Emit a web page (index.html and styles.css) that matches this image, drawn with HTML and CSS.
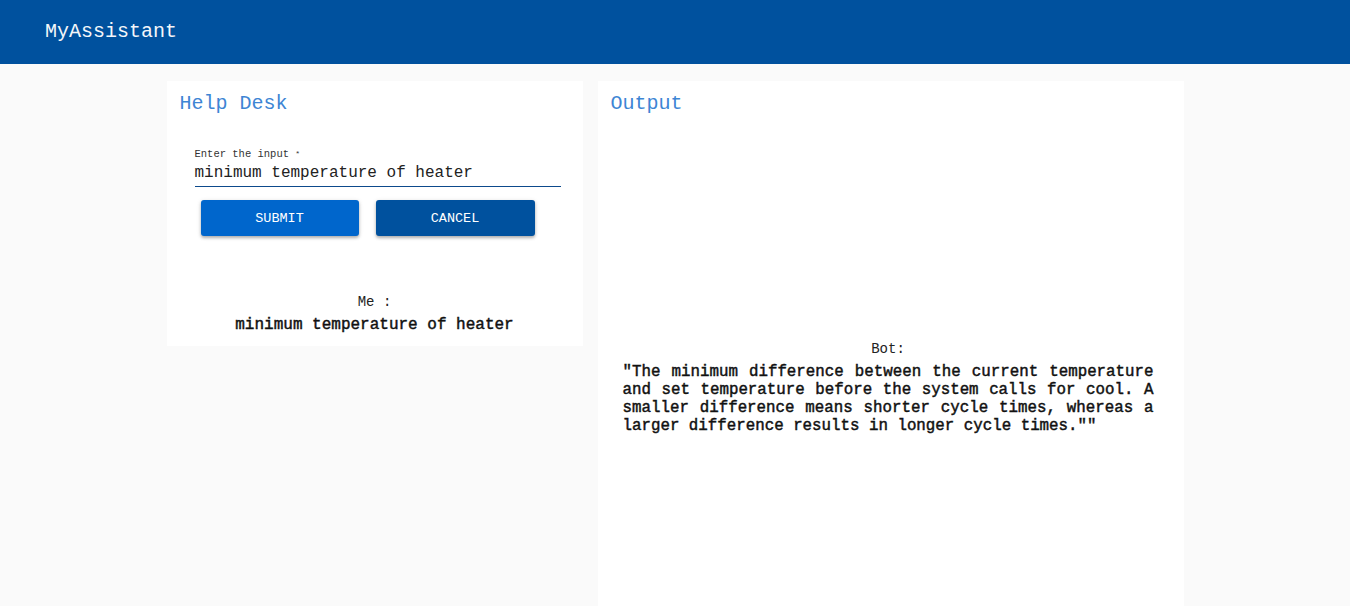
FILE: index.html
```html
<!DOCTYPE html>
<html>
<head>
<meta charset="utf-8">
<title>MyAssistant</title>
<link rel="stylesheet" href="styles.css">
</head>
<body>
<header class="topbar">
  <span class="brand">MyAssistant</span>
</header>
<main class="layout">
  <section class="card help">
    <h2 class="card-title">Help Desk</h2>
    <div class="form">
      <label class="field">
        <span class="field-label">Enter the input <span class="req">*</span></span>
        <span class="field-value">minimum temperature of heater</span>
      </label>
      <div class="actions">
        <button class="btn btn-submit">SUBMIT</button>
        <button class="btn btn-cancel">CANCEL</button>
      </div>
    </div>
    <div class="me">
      <div class="me-label">Me :</div>
      <div class="me-text">minimum temperature of heater</div>
    </div>
  </section>
  <section class="card output">
    <h2 class="card-title">Output</h2>
    <div class="bot">
      <div class="bot-label">Bot:</div>
      <p class="bot-text">"The minimum difference between the current temperature and set temperature before the system calls for cool. A smaller difference means shorter cycle times, whereas a larger difference results in longer cycle times.""</p>
    </div>
  </section>
</main>
</body>
</html>
```
FILE: styles.css
```css
html, body {
  margin: 0;
  padding: 0;
  height: 100%;
  overflow: hidden;
}
body {
  background: #fafafa;
  font-family: "Liberation Mono", "Courier New", monospace;
  color: #222;
}
.topbar {
  height: 64px;
  background: #00519e;
  display: flex;
  align-items: center;
  padding-left: 45px;
}
.brand {
  color: #f4f6fa;
  font-size: 20px;
  line-height: 24px;
}
.layout {
  display: flex;
  justify-content: center;
  align-items: flex-start;
  gap: 15px;
  padding-top: 17px;
}
.card {
  background: #fff;
  box-sizing: border-box;
}
.help {
  width: 416px;
  padding: 11px 0 11px 0;
}
.output {
  width: 586px;
  height: 540px;
  padding: 11px 0 0 0;
}
.card-title {
  margin: 0;
  padding-left: 13px;
  font-size: 20px;
  line-height: 24px;
  font-weight: normal;
  color: #3d85d4;
}
.form {
  padding: 31px 22px 0 28px;
}
.field {
  display: flex;
  flex-direction: column;
  border-bottom: 1px solid #0d4a8c;
  padding-bottom: 3px;
}
.field-label {
  font-size: 10.5px;
  line-height: 14px;
  color: #333;
}
.req {
  font-size: 8px;
  vertical-align: top;
}
.field-value {
  margin-top: 2px;
  font-size: 16px;
  line-height: 20px;
  color: #222;
}
.actions {
  display: flex;
  gap: 17px;
  margin-top: 13px;
  padding-left: 6px;
}
.btn {
  width: 159px;
  height: 36px;
  border: none;
  border-radius: 3px;
  color: #fff;
  font-family: "Liberation Mono", "Courier New", monospace;
  font-size: 13.5px;
  box-shadow: 0 2px 3px rgba(0,0,0,0.25), 0 1px 5px rgba(0,0,0,0.12);
}
.btn-submit {
  background: #0066cc;
  width: 158px;
}
.btn-cancel {
  background: #00519e;
}
.me {
  margin-top: 57px;
  text-align: center;
}
.me-label {
  font-size: 14px;
  line-height: 18px;
  color: #222;
}
.me-text {
  margin-top: 4px;
  font-size: 16px;
  line-height: 20px;
  -webkit-text-stroke: 0.45px #111;
  color: #111;
}
.bot {
  width: 531px;
  margin: 224px 0 0 25px;
}
.bot-label {
  text-align: center;
  font-size: 14px;
  line-height: 18px;
  color: #222;
}
.bot-text {
  margin: 5px 0 0 0;
  font-size: 15.8px;
  line-height: 18px;
  -webkit-text-stroke: 0.45px #111;
  text-align: justify;
  color: #111;
}
```
